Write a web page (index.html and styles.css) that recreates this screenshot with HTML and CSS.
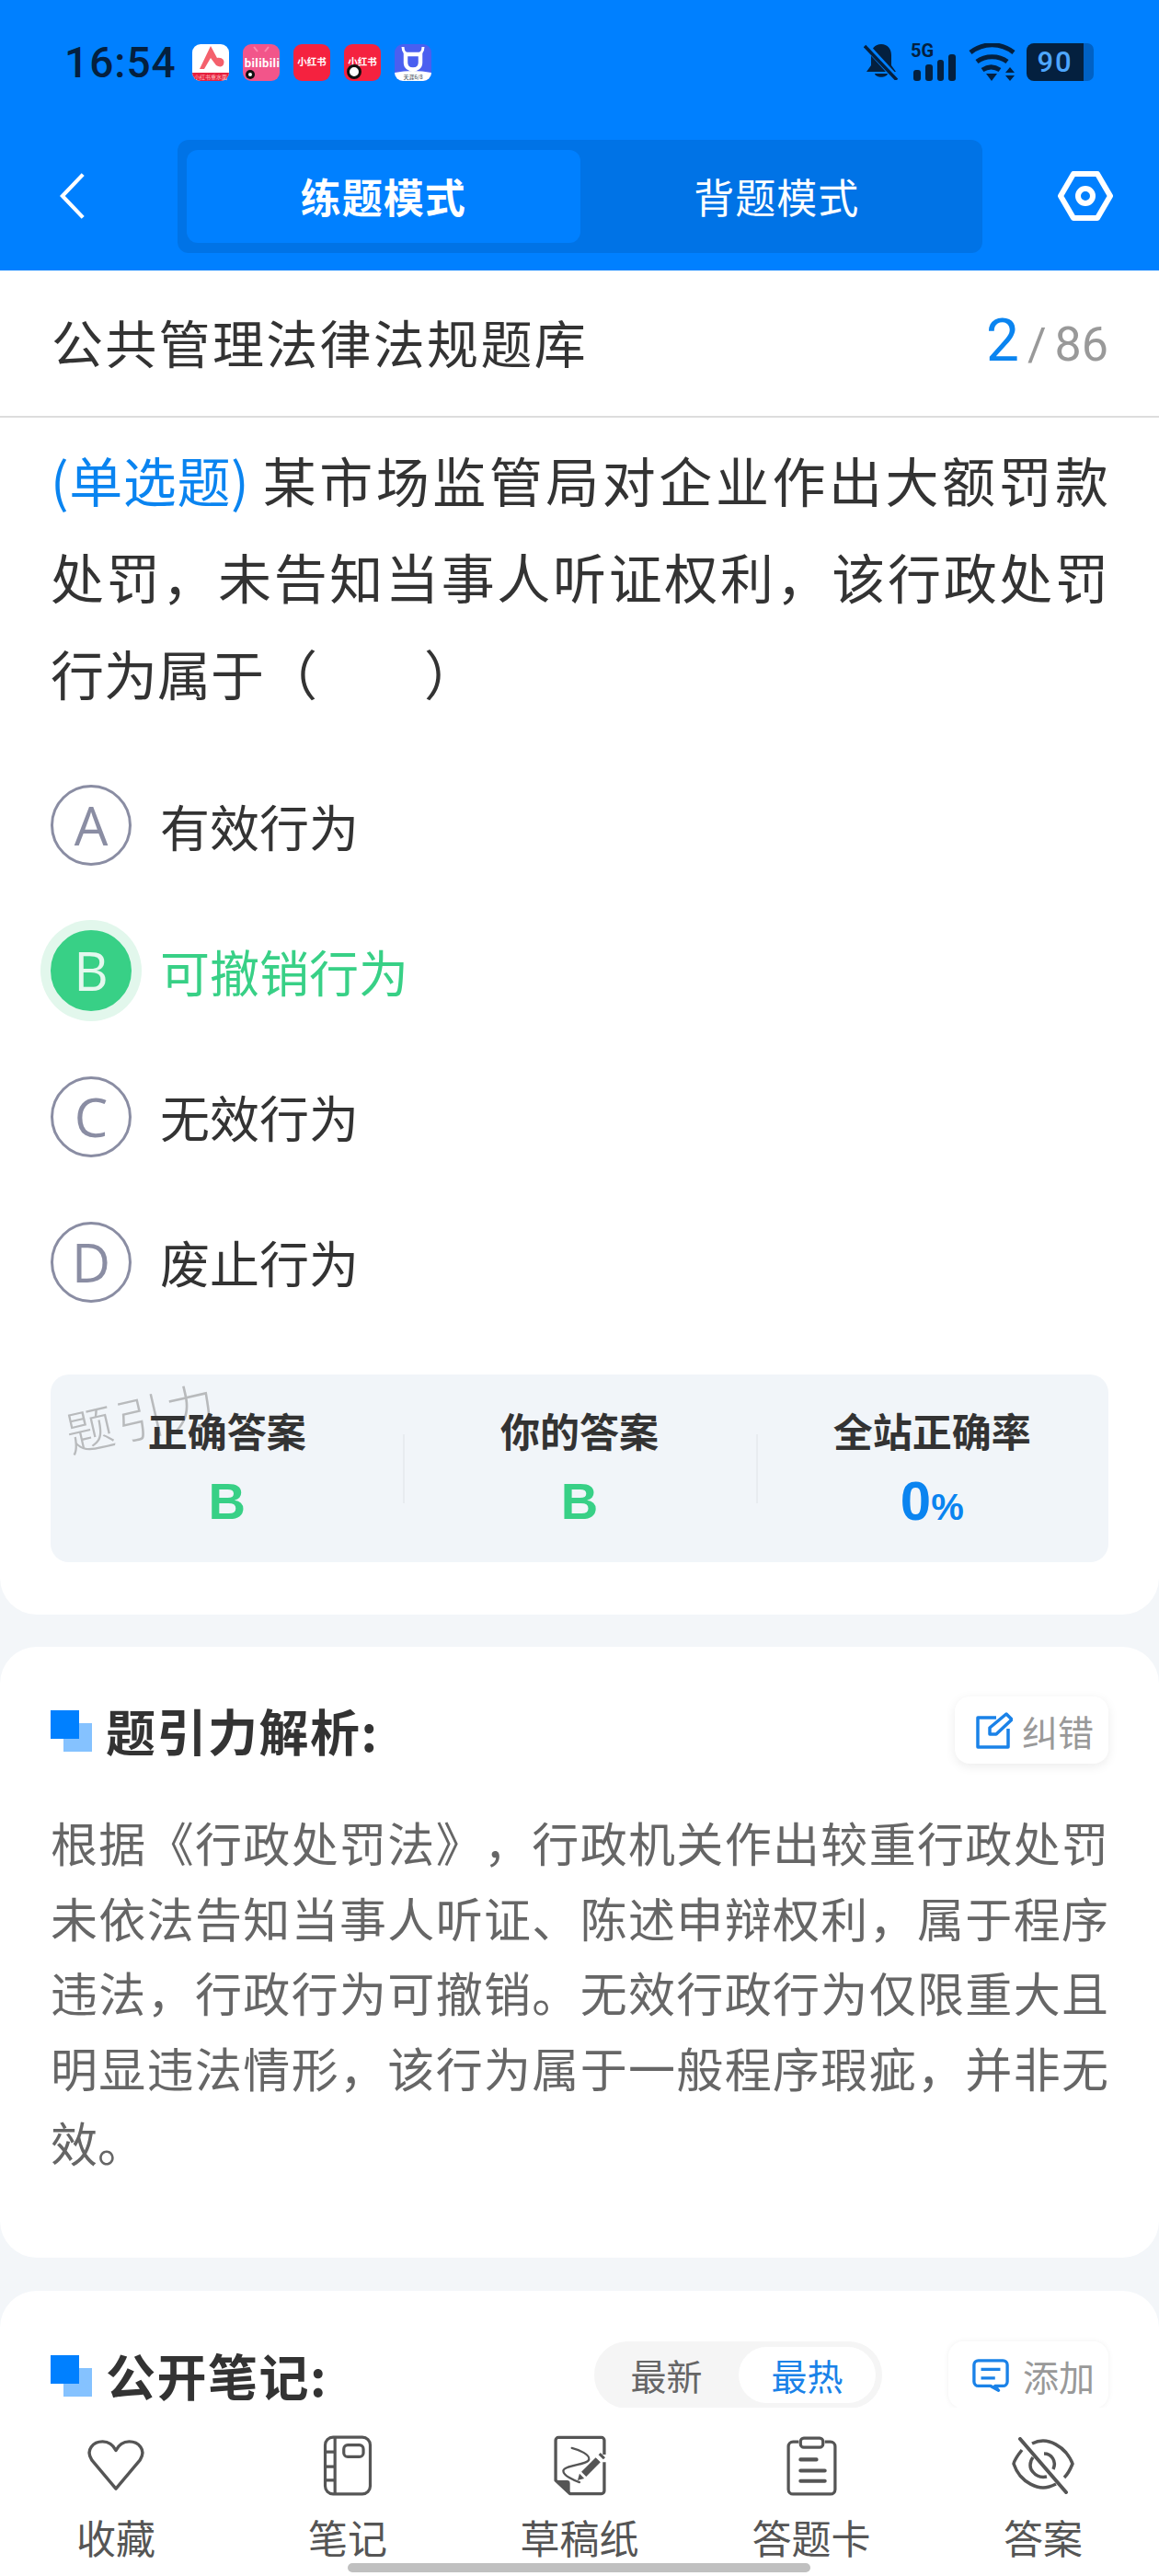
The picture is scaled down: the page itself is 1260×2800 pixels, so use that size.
FILE: index.html
```html
<!doctype html>
<html>
<head>
<meta charset="utf-8">
<title>题引力</title>
<link rel="stylesheet" href="styles.css">
</head>
<body>
<div class="page">
  <header class="top">
    <div class="status">
      <span class="time">16:54</span>
      <div class="apps">
        <svg class="app" viewBox="0 0 40 40"><rect width="40" height="40" rx="9" fill="#fff"/><path d="M0 31h40v0a9 9 0 0 1-9 9H9a9 9 0 0 1-9-9z" fill="#e6213f"/><path d="M8 27 20 2l7 13c5-1 9 2 7 7-1 3-5 3-8 1l-6-8-7 12z" fill="#f4606c"/><text x="20" y="38" class="app-tiny" fill="#fbb">小红书重水面</text></svg>
        <svg class="app" viewBox="0 0 40 40"><rect width="40" height="40" rx="9" fill="#f2558a"/><path d="M12 3l4 5M28 3l-4 5" stroke="#f98ab0" stroke-width="2"/><text x="21" y="25" class="app-bili" fill="#fff">bilibili</text><circle cx="8" cy="33" r="5" fill="#111"/><circle cx="8" cy="33" r="2" fill="#fff"/></svg>
        <div class="app-red">小红书</div>
        <div class="app-red app-dot">小红书</div>
        <svg class="app" viewBox="0 0 40 40"><rect width="40" height="40" rx="9" fill="#4a5ff0"/><path d="M0 31q20-4 40 0v0a9 9 0 0 1-9 9H9a9 9 0 0 1-9-9z" fill="#fff"/><path d="M12 11v9c0 10 16 10 16 0v-9z" fill="none" stroke="#fff" stroke-width="4.5"/><path d="M9 3c0 5 3 8 7 8M31 3c0 5-3 8-7 8" fill="none" stroke="#fff" stroke-width="3"/><text x="20" y="38" class="app-tiny" fill="#345">天涯6/8</text></svg>
      </div>
      <div class="sys">
        <svg class="bell" viewBox="0 0 38 40"><path d="M19 1c7 0 11 5 11 12v11l5 7H3l5-7V13C8 6 12 1 19 1z" fill="#04203f"/><path d="M12 33h14c-1 5-13 5-14 0z" fill="#04203f"/><path d="M1 1l36 39" stroke="#0080ff" stroke-width="7"/><path d="M1 3l35 37" stroke="#04203f" stroke-width="3.5"/></svg>
        <div class="signal">
          <span class="five">5G</span>
          <svg viewBox="0 0 46 29"><g fill="#04203f"><rect x="0" y="17" width="8" height="12" rx="3"/><rect x="13" y="11" width="8" height="18" rx="3"/><rect x="26" y="6" width="7" height="23" rx="3"/><rect x="38" y="0" width="8" height="29" rx="3"/></g></svg>
        </div>
        <svg class="wifi" viewBox="0 0 51 42"><g fill="none" stroke="#04203f" stroke-width="5"><path d="M2 10c14-11 33-11 47 0"/><path d="M9 20c9-7 24-7 33 0"/><path d="M15 29c6-4 13-4 19 0"/></g><path d="M19 33h12l-6 8z" fill="#04203f"/><path d="M45 26l5 6H40zM45 41l5-6H40z" fill="#04203f"/></svg>
        <div class="battery"><span class="level">90</span><span class="cap"></span></div>
      </div>
    </div>
    <div class="nav">
      <svg class="back" viewBox="0 0 30 54"><path d="M27 2 3 27l24 25" fill="none" stroke="#fff" stroke-width="4.5"/></svg>
      <div class="mode">
        <div class="mode-on">练题模式</div>
        <div class="mode-off">背题模式</div>
      </div>
      <svg class="gear" viewBox="0 0 60 54"><path d="M17 3h26l14 24-14 24H17L3 27z" fill="none" stroke="#fff" stroke-width="6" stroke-linejoin="round"/><circle cx="30" cy="27" r="8" fill="none" stroke="#fff" stroke-width="6"/></svg>
    </div>
  </header>

  <div class="title-row">
    <span class="bank">公共管理法律法规题库</span>
    <span class="count"><b>2</b><i>/</i>86</span>
  </div>

  <section class="card card-q">
    <p class="stem"><span class="kind">(单选题)</span>某市场监管局对企业作出大额罚款处罚，未告知当事人听证权利，该行政处罚行为属于（&emsp;&emsp;）</p>
    <div class="opts">
      <div class="opt"><span class="ball">A</span>有效行为</div>
      <div class="opt opt-right"><span class="ball">B</span>可撤销行为</div>
      <div class="opt"><span class="ball">C</span>无效行为</div>
      <div class="opt"><span class="ball">D</span>废止行为</div>
    </div>
    <div class="stats">
      <span class="mark">题引力</span>
      <div class="stat"><b>正确答案</b><em>B</em></div>
      <div class="stat"><b>你的答案</b><em>B</em></div>
      <div class="stat"><b>全站正确率</b><em class="rate">0<small>%</small></em></div>
    </div>
  </section>

  <section class="card card-a">
    <div class="head">
      <span class="squares"></span>
      <h2>题引力解析:</h2>
      <div class="tool tool-fix">
        <svg viewBox="0 0 40 40"><path d="M22 6H2v32h33V18" fill="none" stroke="#1a82e8" stroke-width="3.5" stroke-linejoin="round"/><path d="M33 2l6 6-17 16h-7v-7z" fill="none" stroke="#1a82e8" stroke-width="3.5" stroke-linejoin="round"/></svg>
        纠错
      </div>
    </div>
    <p class="explain">根据《行政处罚法》，行政机关作出较重行政处罚未依法告知当事人听证、陈述申辩权利，属于程序违法，行政行为可撤销。无效行政行为仅限重大且明显违法情形，该行为属于一般程序瑕疵，并非无效。</p>
  </section>

  <section class="card card-n">
    <div class="head">
      <span class="squares"></span>
      <h2>公开笔记:</h2>
      <div class="sort"><span class="sort-off">最新</span><span class="sort-on">最热</span></div>
      <div class="tool tool-add">
        <svg viewBox="0 0 42 38"><path d="M7 2h28a5 5 0 0 1 5 5v19a5 5 0 0 1-5 5h-9l4 5-9-5H7a5 5 0 0 1-5-5V7a5 5 0 0 1 5-5z" fill="none" stroke="#1a82e8" stroke-width="3.5" stroke-linejoin="round"/><path d="M10 12h22M10 22h16" stroke="#1a82e8" stroke-width="3.5"/></svg>
        添加
      </div>
    </div>
  </section>

  <nav class="bar">
    <div class="bar-item">
      <span class="bar-ico"><svg width="62" height="56" viewBox="0 0 64 58"><path d="M32 55 5 23C-3 11 7 2 17 2c7 0 12 4 15 10 3-6 8-10 15-10 10 0 20 9 12 21z" fill="none" stroke="#555" stroke-width="3.5" stroke-linejoin="round"/></svg></span>
      收藏
    </div>
    <div class="bar-item">
      <span class="bar-ico"><svg width="54" height="66" viewBox="0 0 50 62"><rect x="2" y="2" width="46" height="58" rx="8" fill="none" stroke="#555" stroke-width="3"/><path d="M12 2v58M2 17h10M2 32h10M2 46h10" stroke="#555" stroke-width="3"/><rect x="21" y="10" width="20" height="12" rx="4" fill="none" stroke="#555" stroke-width="3"/></svg></span>
      笔记
    </div>
    <div class="bar-item">
      <span class="bar-ico"><svg width="57" height="66" viewBox="0 0 55 63"><path d="M53 20V5a3 3 0 0 0-3-3H5a3 3 0 0 0-3 3v42l15 14h33a3 3 0 0 0 3-3V28" fill="none" stroke="#555" stroke-width="3.2" stroke-linejoin="round"/><path d="M2 47h12a3 3 0 0 1 3 3v11z" fill="#555"/><path d="M19 13c8 2 19 7 18 12-1 6-27 6-27 12 0 5 11 10 17 12" fill="none" stroke="#555" stroke-width="2.2" stroke-linecap="round"/><path d="M44 23l5 5-15 15-5-5zM27 40l5 5-7 2z" fill="#555"/><path d="M48 19l5 5" stroke="#555" stroke-width="3"/></svg></span>
      草稿纸
    </div>
    <div class="bar-item">
      <span class="bar-ico"><svg width="55" height="65" viewBox="0 0 54 64"><path d="M13 6H7a5 5 0 0 0-5 5v46a5 5 0 0 0 5 5h40a5 5 0 0 0 5-5V11a5 5 0 0 0-5-5h-6" fill="none" stroke="#555" stroke-width="3.2"/><rect x="15" y="2" width="24" height="10" rx="3.5" fill="none" stroke="#555" stroke-width="3.2"/><path d="M15 25h17M15 37h26M15 48h26" stroke="#555" stroke-width="4" stroke-linecap="round"/></svg></span>
      答题卡
    </div>
    <div class="bar-item">
      <span class="bar-ico"><svg width="68" height="62" viewBox="0 0 68 62"><path d="M11 14C7 19 3 24 2 29c1 3 3 8 7 13 6 7 16 13 25 13 5 0 10-2 14-4M22 7c4-2 8-3 12-3 9 0 19 6 25 13 4 5 6 9 7 12-2 5-4 10-9 15" fill="none" stroke="#555" stroke-width="3.5"/><path d="M23 22c-4 5-4 12 0 16 4 5 10 6 15 5M35 18c8 0 14 8 10 17" fill="none" stroke="#555" stroke-width="3.5"/><path d="M9 2l50 58" stroke="#555" stroke-width="4" stroke-linecap="round"/></svg></span>
      答案
    </div>
    <span class="home"></span>
  </nav>
</div>
</body>
</html>
```

FILE: styles.css
```css
* { box-sizing: border-box; }
html, body { margin: 0; padding: 0; }
body { font-family: "Noto Sans CJK SC", "Noto Sans", sans-serif; background: #f3f6f9; }
.page { position: relative; width: 1260px; height: 2800px; overflow: hidden; }

.top { height: 294px; background: #0080ff; display: flex; flex-direction: column; }
.status { height: 152px; padding: 44px 71px 0 70px; display: flex; align-items: flex-start; }
.time { font: 500 46px/48px "Roboto", sans-serif; color: #04203f; letter-spacing: 1px; width: 139px; }
.apps { display: flex; gap: 15px; margin-top: 4px; }
.app { width: 40px; height: 40px; display: block; }
.app-tiny { font-size: 6px; text-anchor: middle; }
.app-bili { font: 700 13px "Roboto", sans-serif; text-anchor: middle; letter-spacing: .4px; }
.app-red { position: relative; width: 40px; height: 40px; border-radius: 9px; background: #f5223f; color: #fff; font-size: 10.5px; font-weight: 700; line-height: 38px; text-align: center; white-space: nowrap; }
.app-dot::after { content: ""; position: absolute; left: 3px; bottom: 2px; width: 10px; height: 10px; border-radius: 50%; background: #fff; border: 3px solid #111; }
.sys { margin-left: auto; display: flex; align-items: flex-start; margin-top: 3px; }
.bell { width: 38px; height: 40px; }
.signal { position: relative; width: 49px; height: 41px; margin-left: 13px; }
.signal svg { position: absolute; left: 3px; bottom: 0; width: 46px; height: 29px; }
.five { position: absolute; left: 0; top: -3px; font: 700 20px/22px "Roboto", sans-serif; color: #04203f; }
.wifi { width: 51px; height: 42px; margin-left: 14px; }
.battery { display: flex; align-items: center; margin-left: 12px; }
.level { width: 62px; height: 41px; background: #04203f; border-radius: 8px 0 0 8px; color: #4da6ff; font: 500 31px/41px "Roboto", sans-serif; letter-spacing: 2px; text-align: center; }
.cap { width: 11px; height: 41px; background: #0061c4; border-radius: 0 7px 7px 0; }

.nav { flex: 1; display: flex; align-items: flex-start; padding: 0 50px 0 65px; }
.back { width: 28px; height: 52px; margin-top: 35px; }
.mode { width: 875px; height: 123px; margin-left: 100px; padding: 11px 10px; background: #0073e6; border-radius: 12px; display: flex; }
.mode-on, .mode-off { flex: 1; color: #fff; font-size: 44px; line-height: 101px; text-align: center; letter-spacing: 1px; }
.mode-on { background: #0080ff; border-radius: 12px; font-weight: 700; }
.gear { width: 60px; height: 54px; margin: 34px 0 0 auto; }

.title-row { height: 160px; padding: 0 55px 6px 56px; background: #fff; border-bottom: 2px solid #ddd; display: flex; align-items: center; justify-content: space-between; }
.bank { font-size: 56px; color: #333; letter-spacing: 2.3px; }
.count { color: #999; font: 400 52px/60px "Roboto", sans-serif; margin-top: 6px; }
.count b { color: #0a84f0; font-weight: 400; font-size: 64px; }
.count i { font-style: normal; margin: 0 9px; font-size: 50px; }

.card { background: #fff; }
.card-q { height: 1301px; padding: 15px 55px 0; border-radius: 0 0 40px 40px; }
.stem { margin: 0; font-size: 58px; line-height: 105px; text-align: justify; text-spacing-trim: space-all; color: #333; }
.kind { display: inline-block; color: #0a84f0; letter-spacing: .6px; margin-right: 11px; }
.opts { margin-top: 69px; display: flex; flex-direction: column; gap: 70.3px; }
.opt { display: flex; align-items: center; height: 88px; font-size: 54px; color: #333; }
.ball { width: 88px; height: 88px; margin-right: 31px; border: 3px solid #8a8da3; border-radius: 50%; color: #8a8da3; font: 400 58px/82px "Open Sans", sans-serif; text-align: center; }
.opt-right { color: #38d086; }
.opt-right .ball { background: #38d086; border-color: #38d086; color: #e4f8ee; box-shadow: 0 0 0 11px #e2f7ec; }

.stats { position: relative; display: flex; height: 204px; margin-top: 78px; background: #f1f5f9; border-radius: 20px; }
.stat { flex: 1; display: flex; flex-direction: column; align-items: center; padding-top: 29px; position: relative; }
.stat + .stat::before { content: ""; position: absolute; left: 0; top: 65px; height: 75px; border-left: 2px solid #e8ecf0; }
.stat b { font-size: 43px; line-height: 62px; color: #333; }
.stat em { font: 700 56px/70px "Liberation Sans", sans-serif; color: #38d086; margin-top: 12px; }
.stat .rate { color: #0a84f0; font-size: 60px; }
.rate small { font-size: 40px; }
.mark { position: absolute; left: 15px; top: 10px; font-size: 52px; line-height: 70px; font-weight: 300; color: #b8babc; transform: rotate(-13deg); letter-spacing: 4px; white-space: nowrap; }

.card-a { height: 664px; margin-top: 35px; padding: 54px 55px 0; border-radius: 40px; }
.card-n { height: 400px; margin-top: 36px; padding: 55px 55px 0; border-radius: 40px; }
.head { display: flex; align-items: center; height: 73px; }
.squares { position: relative; width: 45px; height: 45px; margin: 2px 15px 0 0; }
.squares::before { content: ""; position: absolute; right: 0; bottom: 0; width: 31px; height: 31px; background: #85c2ff; }
.squares::after { content: ""; position: absolute; left: 0; top: 0; width: 31px; height: 31px; background: #0080ff; }
h2 { margin: 0; font-size: 54px; line-height: 73px; font-weight: 700; letter-spacing: 1.5px; color: #333; }
.tool { display: flex; align-items: center; height: 73px; margin-left: auto; padding: 0 16px 0 23px; background: #fff; border-radius: 16px; box-shadow: 0 3px 12px rgba(0, 0, 0, .08); color: #999; font-size: 39px; white-space: nowrap; }
.tool svg { width: 40px; height: 40px; margin-right: 10px; flex: none; }
.explain { margin: 45px 0 0; font-size: 51px; line-height: 81.5px; text-align: justify; text-spacing-trim: space-all; color: #666; }

.sort { display: flex; align-items: center; height: 73px; margin-left: auto; padding: 0 7px 0 0; background: #f5f5f5; border-radius: 36px; font-size: 39px; color: #666; }
.sort span { text-align: center; line-height: 61px; }
.sort .sort-off { width: 157px; }
.sort .sort-on { width: 149px; background: #fff; color: #1a82e8; border-radius: 31px; }
.tool-add { margin-left: 72px; padding: 0 15px 0 26px; }
.tool-add svg { margin-right: 15px; }
.card-n .tool { box-shadow: 0 0 6px rgba(0, 0, 0, .06); }

.bar { position: absolute; left: 0; right: 0; bottom: 0; height: 183px; background: #fff; display: flex; padding-top: 30px; }
.bar-item { flex: 1; display: flex; flex-direction: column; align-items: center; color: #555; font-size: 43px; line-height: 60px; }
.bar-ico { height: 66px; margin-bottom: 14px; display: flex; align-items: center; }
.home { position: absolute; left: 378px; bottom: 4px; width: 503px; height: 10px; border-radius: 5px; background: #c0c0c0; }
```
